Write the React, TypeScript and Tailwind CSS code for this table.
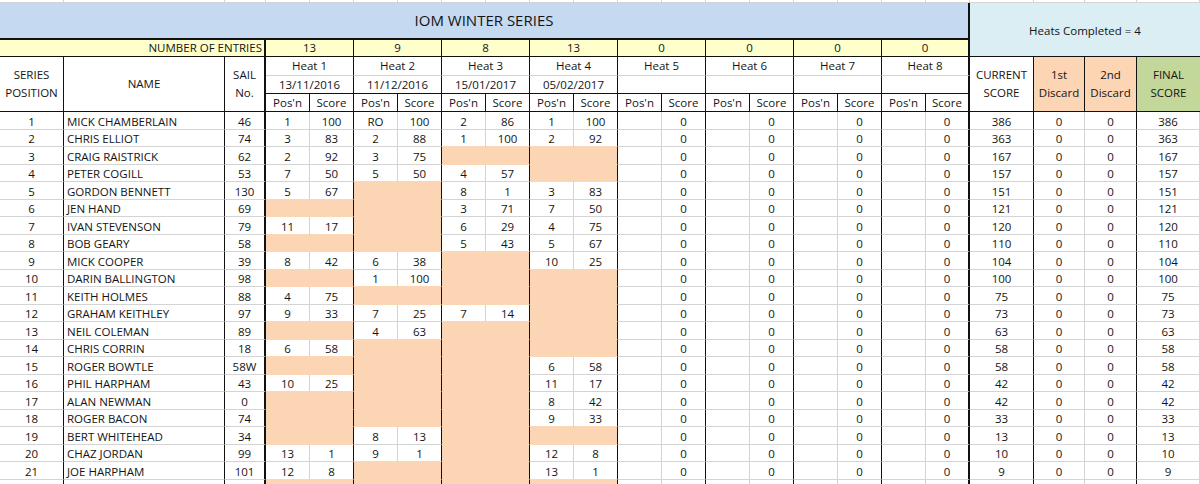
type Heat = [string, string] | null;

interface Entry {
	pos: string;
	name: string;
	sail: string;
	heats: Heat[];
	cur: string;
}

const entries: Entry[] = [
	{ pos: "1", name: "MICK CHAMBERLAIN", sail: "46", heats: [["1", "100"], ["RO", "100"], ["2", "86"], ["1", "100"]], cur: "386" },
	{ pos: "2", name: "CHRIS ELLIOT", sail: "74", heats: [["3", "83"], ["2", "88"], ["1", "100"], ["2", "92"]], cur: "363" },
	{ pos: "3", name: "CRAIG RAISTRICK", sail: "62", heats: [["2", "92"], ["3", "75"], null, null], cur: "167" },
	{ pos: "4", name: "PETER COGILL", sail: "53", heats: [["7", "50"], ["5", "50"], ["4", "57"], null], cur: "157" },
	{ pos: "5", name: "GORDON BENNETT", sail: "130", heats: [["5", "67"], null, ["8", "1"], ["3", "83"]], cur: "151" },
	{ pos: "6", name: "JEN HAND", sail: "69", heats: [null, null, ["3", "71"], ["7", "50"]], cur: "121" },
	{ pos: "7", name: "IVAN STEVENSON", sail: "79", heats: [["11", "17"], null, ["6", "29"], ["4", "75"]], cur: "120" },
	{ pos: "8", name: "BOB GEARY", sail: "58", heats: [null, null, ["5", "43"], ["5", "67"]], cur: "110" },
	{ pos: "9", name: "MICK COOPER", sail: "39", heats: [["8", "42"], ["6", "38"], null, ["10", "25"]], cur: "104" },
	{ pos: "10", name: "DARIN BALLINGTON", sail: "98", heats: [null, ["1", "100"], null, null], cur: "100" },
	{ pos: "11", name: "KEITH HOLMES", sail: "88", heats: [["4", "75"], null, null, null], cur: "75" },
	{ pos: "12", name: "GRAHAM KEITHLEY", sail: "97", heats: [["9", "33"], ["7", "25"], ["7", "14"], null], cur: "73" },
	{ pos: "13", name: "NEIL COLEMAN", sail: "89", heats: [null, ["4", "63"], null, null], cur: "63" },
	{ pos: "14", name: "CHRIS CORRIN", sail: "18", heats: [["6", "58"], null, null, null], cur: "58" },
	{ pos: "15", name: "ROGER BOWTLE", sail: "58W", heats: [null, null, null, ["6", "58"]], cur: "58" },
	{ pos: "16", name: "PHIL HARPHAM", sail: "43", heats: [["10", "25"], null, null, ["11", "17"]], cur: "42" },
	{ pos: "17", name: "ALAN NEWMAN", sail: "0", heats: [null, null, null, ["8", "42"]], cur: "42" },
	{ pos: "18", name: "ROGER BACON", sail: "74", heats: [null, null, null, ["9", "33"]], cur: "33" },
	{ pos: "19", name: "BERT WHITEHEAD", sail: "34", heats: [null, ["8", "13"], null, null], cur: "13" },
	{ pos: "20", name: "CHAZ JORDAN", sail: "99", heats: [["13", "1"], ["9", "1"], null, ["12", "8"]], cur: "10" },
	{ pos: "21", name: "JOE HARPHAM", sail: "101", heats: [["12", "8"], null, null, ["13", "1"]], cur: "9" },
	{ pos: "", name: "", sail: "", heats: [null, null, null, null], cur: "" },
];

const heatHead = [
	{ n: "13", title: "Heat 1", date: "13/11/2016" },
	{ n: "9", title: "Heat 2", date: "11/12/2016" },
	{ n: "8", title: "Heat 3", date: "15/01/2017" },
	{ n: "13", title: "Heat 4", date: "05/02/2017" },
	{ n: "0", title: "Heat 5", date: "" },
	{ n: "0", title: "Heat 6", date: "" },
	{ n: "0", title: "Heat 7", date: "" },
	{ n: "0", title: "Heat 8", date: "" },
];

// border helpers (side widths + colours written out in full)
const gR = "border-r border-r-[#d4d4d4]";
const gB = "border-b border-b-[#d4d4d4]";
const dR = "border-r border-r-[#111]";
const dR2 = "border-r-2 border-r-[#111]";
const dB = "border-b border-b-[#111]";
const oR = "border-r border-r-[#fcd5b4]";
const oB = "border-b border-b-[#fcd5b4]";
const orange = "bg-[#fcd5b4]";

const Cell = ({ className = "", children }: { className?: string; children?: React.ReactNode }) => (
	<div className={`flex items-center justify-center overflow-hidden whitespace-nowrap ${className}`}>{children}</div>
);

const App = () => {
	const isFill = (r: number, k: number) => k < 4 && !!entries[r] && entries[r].heats[k] === null;

	return (
		<div className="h-[484px] w-[1200px] overflow-hidden bg-white font-['Open_Sans',sans-serif] text-[11.5px] text-[#141414]">
			<div className="grid grid-cols-[64px_161px_41px_repeat(16,44px)_64px_51px_52px_63px] grid-rows-[3px_37px_17px_19px_18px_18px_repeat(22,17.5px)]">
				{/* strip of the row above */}
				{Array.from({ length: 23 }).map((_, i) => (
					<div key={`s${i}`} className={`${gR} ${gB}`} />
				))}

				{/* title */}
				<Cell className={`col-span-19 bg-[#c5d9f1] text-[15px] ${dR2} border-b-2 border-b-[#111]`}>IOM WINTER SERIES</Cell>
				<Cell className={`col-span-4 row-span-2 bg-[#daeef3] ${dB} pt-[2px]`}>Heats Completed = 4</Cell>

				{/* number of entries */}
				<Cell className={`col-span-3 justify-end pr-[2px] bg-[#ffffcc] ${dR2} ${dB}`}>NUMBER OF ENTRIES</Cell>
				{heatHead.map((h, i) => (
					<Cell key={`n${i}`} className={`col-span-2 bg-[#ffffcc] ${i === 7 ? dR2 : dR} ${dB}`}>
						{h.n}
					</Cell>
				))}

				{/* column headers */}
				<Cell className={`row-span-3 flex-col leading-[18px] ${dR} ${dB}`}>
					<span>SERIES</span>
					<span>POSITION</span>
				</Cell>
				<Cell className={`row-span-3 ${dR} ${dB}`}>NAME</Cell>
				<Cell className={`row-span-3 flex-col leading-[18px] ${dR2} ${dB}`}>
					<span>SAIL</span>
					<span>No.</span>
				</Cell>
				{heatHead.map((h, i) => (
					<Cell key={`h${i}`} className={`col-span-2 ${i === 7 ? dR2 : dR} ${gB}`}>
						{h.title}
					</Cell>
				))}
				<Cell className={`row-span-3 flex-col leading-[18px] ${dR} ${dB}`}>
					<span>CURRENT</span>
					<span>SCORE</span>
				</Cell>
				<Cell className={`row-span-3 flex-col leading-[18px] ${orange} ${dR} ${dB}`}>
					<span>1st</span>
					<span>Discard</span>
				</Cell>
				<Cell className={`row-span-3 flex-col leading-[18px] ${orange} ${dR} ${dB}`}>
					<span>2nd</span>
					<span>Discard</span>
				</Cell>
				<Cell className={`row-span-3 flex-col leading-[18px] bg-[#c4d79b] ${dB}`}>
					<span>FINAL</span>
					<span>SCORE</span>
				</Cell>
				{heatHead.map((h, i) => (
					<Cell key={`d${i}`} className={`col-span-2 ${i === 7 ? dR2 : dR} ${dB}`}>
						{h.date}
					</Cell>
				))}
				{heatHead.map((_, i) => [
					<Cell key={`p${i}`} className={`${dR} ${dB}`}>
						Pos'n
					</Cell>,
					<Cell key={`c${i}`} className={`${i === 7 ? dR2 : dR} ${dB}`}>
						Score
					</Cell>,
				])}

				{/* results */}
				{entries.map((e, r) => [
					<Cell key={`a${r}`} className={`pt-[2px] ${dR} ${gB}`}>
						{e.pos}
					</Cell>,
					<Cell key={`b${r}`} className={`pt-[2px] justify-start pl-[3px] ${dR} ${gB}`}>
						{e.name}
					</Cell>,
					<Cell key={`sl${r}`} className={`pt-[2px] ${dR2} ${gB}`}>
						{e.sail}
					</Cell>,
					...heatHead.flatMap((_, k) => {
						const val: Heat = k < 4 ? e.heats[k] : ["", e.pos ? "0" : ""];
						const fill = isFill(r, k);
						const bottom = fill || isFill(r + 1, k) ? oB : gB;
						return [
							<Cell key={`hp${r}-${k}`} className={`pt-[2px] ${fill ? `${orange} ${oR}` : gR} ${bottom}`}>
								{val ? val[0] : ""}
							</Cell>,
							<Cell key={`hs${r}-${k}`} className={`pt-[2px] ${fill ? orange : ""} ${k === 7 ? dR2 : dR} ${bottom}`}>
								{val ? val[1] : ""}
							</Cell>,
						];
					}),
					<Cell key={`cu${r}`} className={`pt-[2px] ${dR} ${gB}`}>
						{e.cur}
					</Cell>,
					<Cell key={`x1${r}`} className={`pt-[2px] ${gR} ${gB}`}>
						{e.pos ? "0" : ""}
					</Cell>,
					<Cell key={`x2${r}`} className={`pt-[2px] ${dR} ${gB}`}>
						{e.pos ? "0" : ""}
					</Cell>,
					<Cell key={`f${r}`} className={`pt-[2px] ${gR} ${gB}`}>
						{e.cur}
					</Cell>,
				])}
			</div>
		</div>
	);
};

export default App;
